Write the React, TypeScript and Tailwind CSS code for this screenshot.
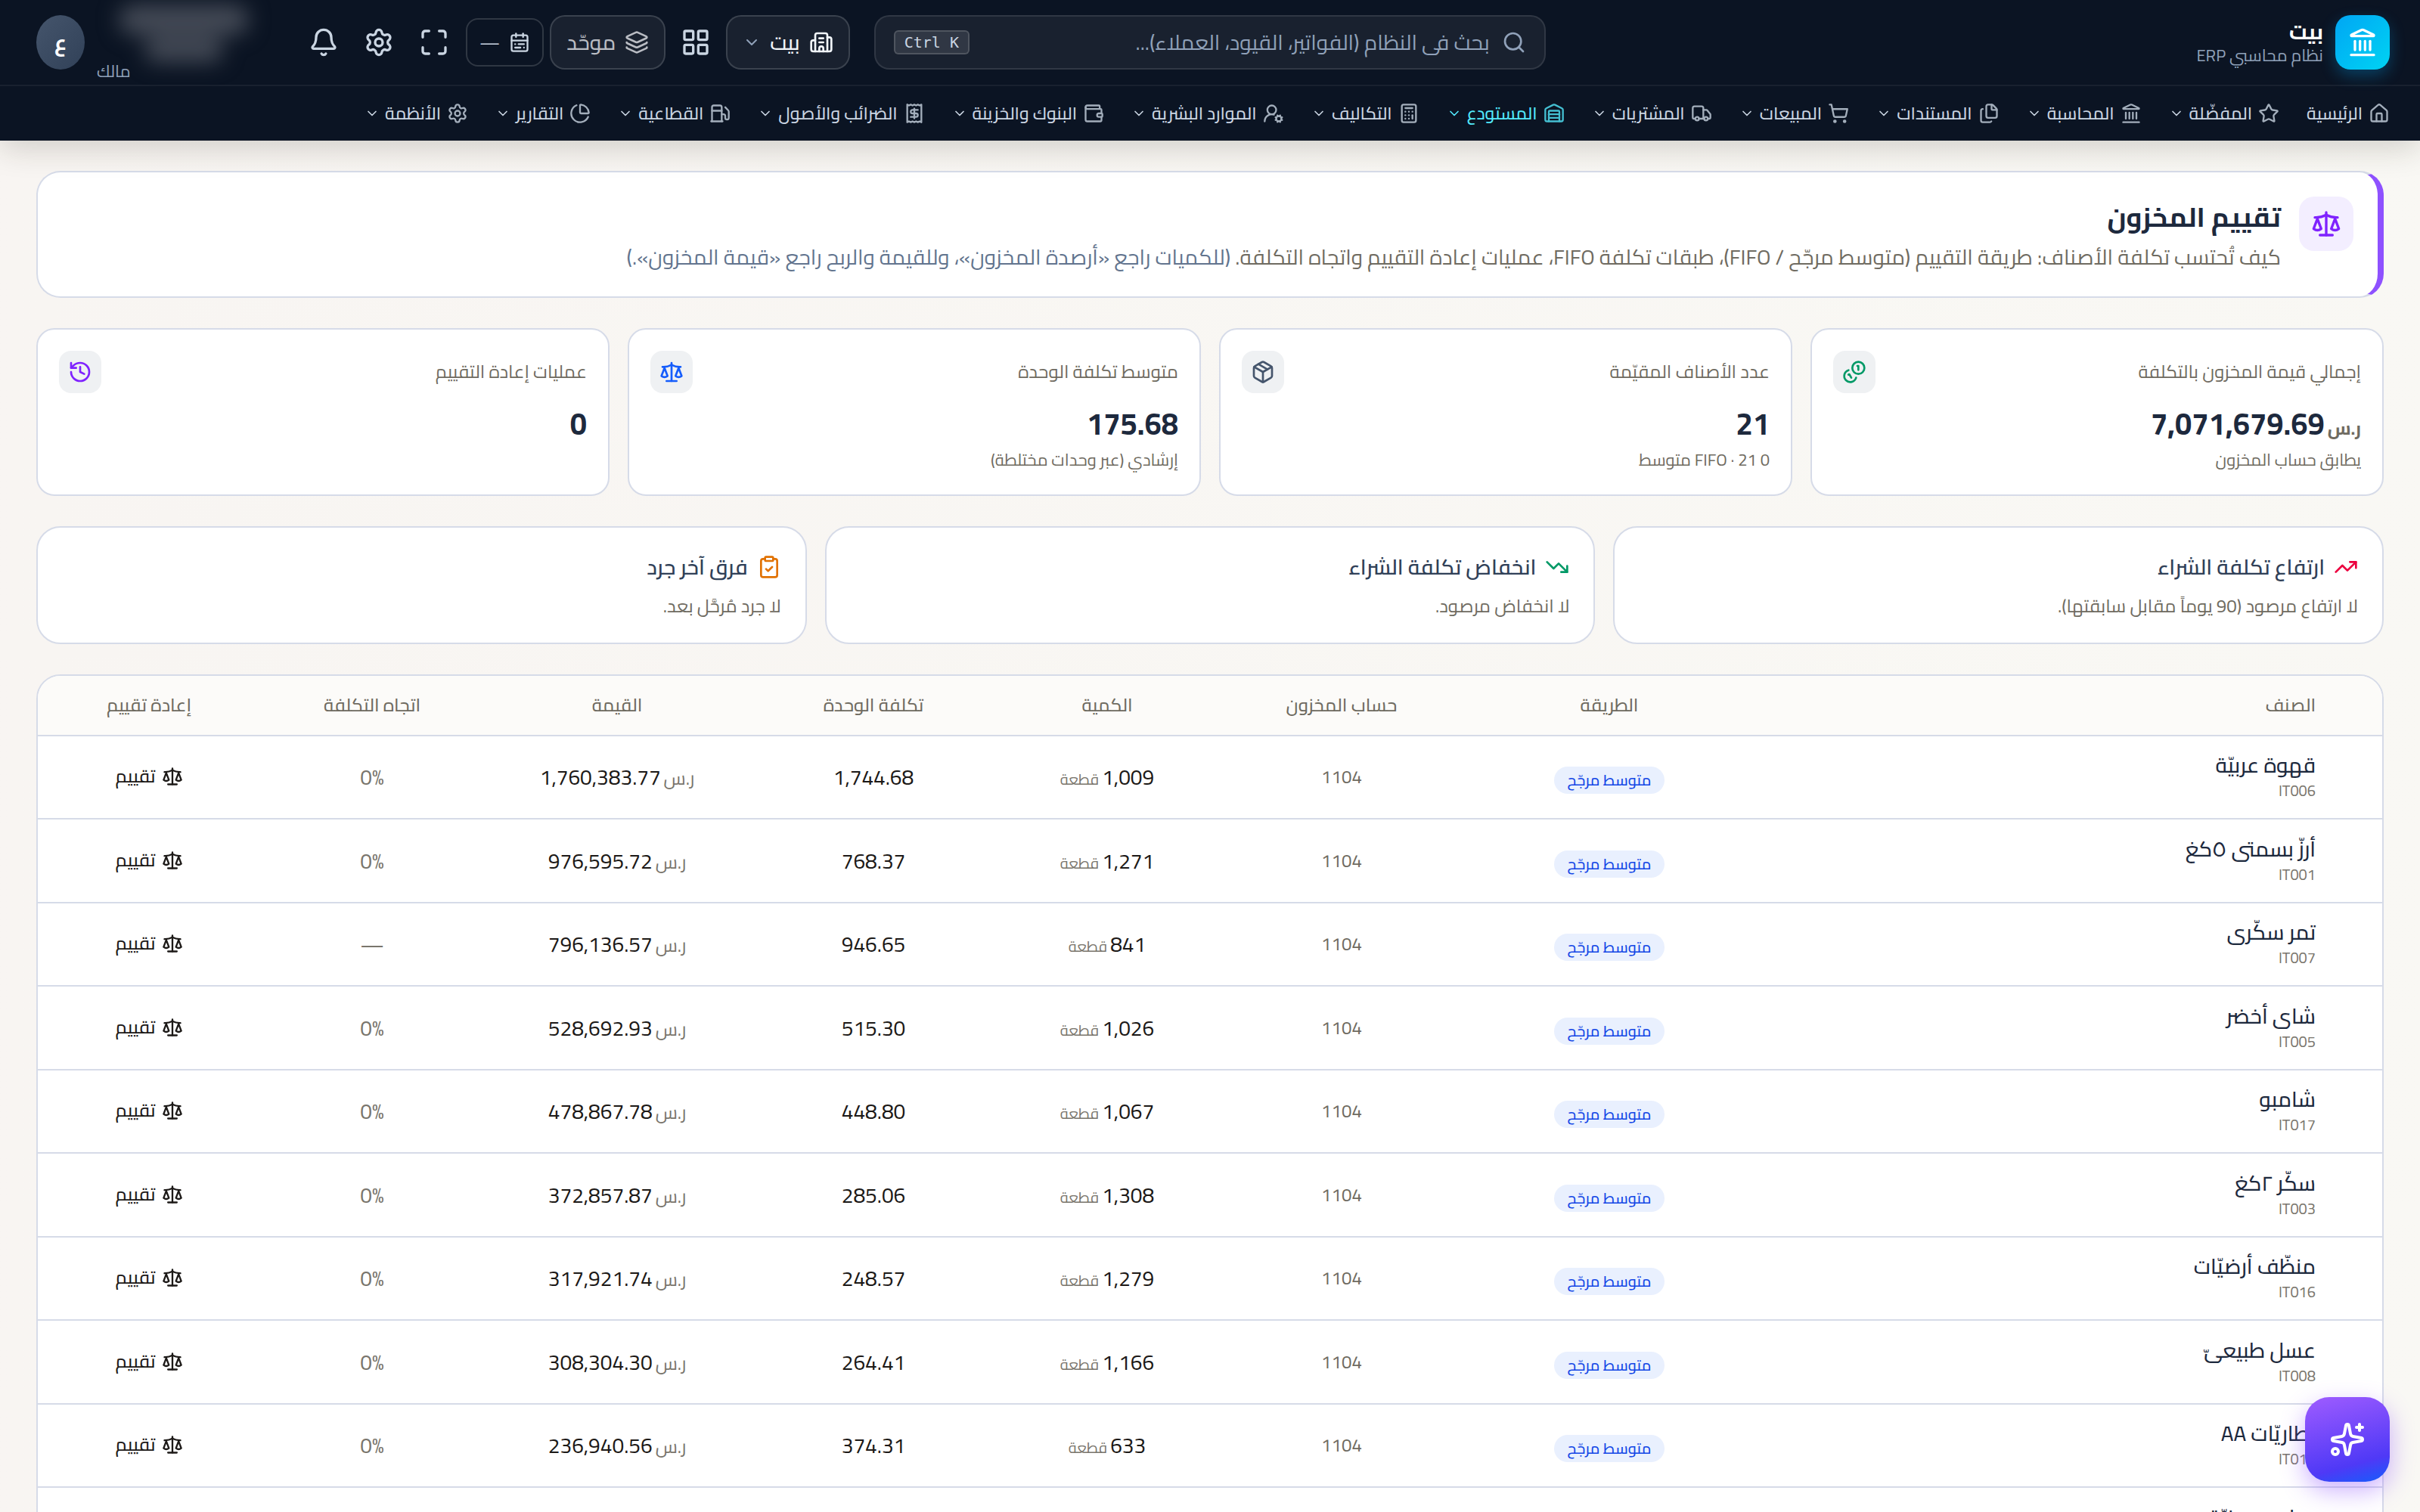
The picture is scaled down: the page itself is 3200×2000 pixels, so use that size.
import * as React from "react";
import {
  Bell,
  Building2,
  Calculator,
  CalendarRange,
  ChartPie,
  ChevronDown,
  ClipboardCheck,
  Files,
  Fuel,
  History,
  House,
  Landmark,
  Layers,
  LayoutGrid,
  Maximize,
  Package,
  Receipt,
  Scale,
  Search,
  Settings,
  ShoppingCart,
  Sparkles,
  Star,
  TrendingDown,
  TrendingUp,
  Truck,
  UserRoundCog,
  Wallet,
  Warehouse,
  type LucideIcon,
} from "lucide-react";

type NavEntry = { label: string; icon: LucideIcon; menu?: boolean; active?: boolean };

const navEntries: NavEntry[] = [
  { label: "الرئيسية", icon: House, menu: false },
  { label: "المفضّلة", icon: Star },
  { label: "المحاسبة", icon: Landmark },
  { label: "المستندات", icon: Files },
  { label: "المبيعات", icon: ShoppingCart },
  { label: "المشتريات", icon: Truck },
  { label: "المستودع", icon: Warehouse, active: true },
  { label: "التكاليف", icon: Calculator },
  { label: "الموارد البشرية", icon: UserRoundCog },
  { label: "البنوك والخزينة", icon: Wallet },
  { label: "الضرائب والأصول", icon: Receipt },
  { label: "القطاعية", icon: Fuel },
  { label: "التقارير", icon: ChartPie },
  { label: "الأنظمة", icon: Settings },
];

function CoinPair({ size = 24 }: { size?: number }) {
  return (
    <svg
      width={size}
      height={size}
      viewBox="0 0 24 24"
      fill="none"
      stroke="currentColor"
      strokeWidth={2}
      strokeLinecap="round"
      strokeLinejoin="round"
      aria-hidden="true"
    >
      <path d="M13.744 17.736a6 6 0 1 1-7.48-7.48" />
      <path d="M15 6h1v4" />
      <path d="m6.134 14.768.866-.5 2 3.464" />
      <circle cx="16" cy="8" r="6" />
    </svg>
  );
}

type Stat = {
  label: string;
  value: string;
  currency?: string;
  note?: string;
  icon: React.ComponentType<{ size?: number }>;
  tone: string;
};

const stats: Stat[] = [
  {
    label: "إجمالي قيمة المخزون بالتكلفة",
    value: "7,071,679.69",
    currency: "ر.س",
    note: "يطابق حساب المخزون",
    icon: CoinPair,
    tone: "text-[#009966]",
  },
  {
    label: "عدد الأصناف المقيّمة",
    value: "21",
    note: "0 FIFO · 21 متوسط",
    icon: Package,
    tone: "text-[#45556c]",
  },
  {
    label: "متوسط تكلفة الوحدة",
    value: "175.68",
    note: "إرشادي (عبر وحدات مختلطة)",
    icon: Scale,
    tone: "text-[#155dfc]",
  },
  { label: "عمليات إعادة التقييم", value: "0", icon: History, tone: "text-[#7f22fe]" },
];

const alerts = [
  {
    title: "ارتفاع تكلفة الشراء",
    note: "لا ارتفاع مرصود (90 يوماً مقابل سابقتها).",
    icon: TrendingUp,
    tone: "text-[#ec003f]",
  },
  {
    title: "انخفاض تكلفة الشراء",
    note: "لا انخفاض مرصود.",
    icon: TrendingDown,
    tone: "text-[#009966]",
  },
  {
    title: "فرق آخر جرد",
    note: "لا جرد مُرحَّل بعد.",
    icon: ClipboardCheck,
    tone: "text-[#e17100]",
  },
];

type Item = {
  name: string;
  code: string;
  qty: string;
  unitCost: string;
  value: string;
  trend: string;
};

const items: Item[] = [
  { name: "قهوة عربيّة", code: "IT006", qty: "1,009", unitCost: "1,744.68", value: "1,760,383.77", trend: "0%" },
  { name: "أرزّ بسمتى ٥كغ", code: "IT001", qty: "1,271", unitCost: "768.37", value: "976,595.72", trend: "0%" },
  { name: "تمر سكّرى", code: "IT007", qty: "841", unitCost: "946.65", value: "796,136.57", trend: "—" },
  { name: "شاى أخضر", code: "IT005", qty: "1,026", unitCost: "515.30", value: "528,692.93", trend: "0%" },
  { name: "شامبو", code: "IT017", qty: "1,067", unitCost: "448.80", value: "478,867.78", trend: "0%" },
  { name: "سكّر ٢كغ", code: "IT003", qty: "1,308", unitCost: "285.06", value: "372,857.87", trend: "0%" },
  { name: "منظّف أرضيّات", code: "IT016", qty: "1,279", unitCost: "248.57", value: "317,921.74", trend: "0%" },
  { name: "عسل طبيعىّ", code: "IT008", qty: "1,166", unitCost: "264.41", value: "308,304.30", trend: "0%" },
  { name: "بطاريّات AA", code: "IT019", qty: "633", unitCost: "374.31", value: "236,940.56", trend: "0%" },
  { name: "مياه معدنيّة", code: "IT011", qty: "1,120", unitCost: "201.15", value: "225,288.00", trend: "0%" },
];

function IconButton({ label, icon: Icon, wide }: { label: string; icon: LucideIcon; wide?: boolean }) {
  return (
    <button
      type="button"
      aria-label={label}
      className={
        "flex h-[72px] items-center justify-center rounded-[20px] text-slate-300 " + (wide ? "w-[68px]" : "w-16")
      }
    >
      <Icon size={40} strokeWidth={2} />
    </button>
  );
}

function TopBar() {
  return (
    <div className="flex h-[114px] items-center border-b-2 border-white/6 px-10">
      <div className="flex items-center gap-4">
        <div className="flex size-[72px] items-center justify-center rounded-[20px] bg-linear-to-br from-[#00a6f4] to-[#00d3f2] text-white shadow-[0_8px_20px_rgba(0,166,244,0.3)]">
          <Landmark size={40} strokeWidth={2} />
        </div>
        <div className="flex flex-col">
          <span className="text-[28px] leading-[34px] font-bold text-white">بيت</span>
          <span className="text-[22px] leading-[28px] text-slate-400">نظام محاسبي ERP</span>
        </div>
      </div>

      <div className="flex flex-1 justify-end px-8">
        <label className="flex h-[72px] w-full max-w-[888px] items-center gap-4 rounded-[20px] border-2 border-white/10 bg-white/6 px-6">
          <Search size={32} className="shrink-0 text-slate-400" strokeWidth={2} />
          <input
            type="text"
            aria-label="بحث"
            placeholder="بحث فى النظام (الفواتير، القيود، العملاء)..."
            className="min-w-0 flex-1 bg-transparent text-[28px] leading-10 text-white outline-none placeholder:text-slate-400"
          />
          <kbd
            dir="ltr"
            className="flex h-8 items-center rounded-md border-2 border-white/15 bg-white/10 px-3 font-['DejaVu_Sans_Mono',monospace] text-xl text-slate-300"
          >
            Ctrl K
          </kbd>
        </label>
      </div>

      <div className="flex items-center gap-2">
        <button
          type="button"
          className="flex h-[72px] items-center gap-3 rounded-[20px] border-2 border-white/15 bg-white/6 px-5 text-[28px] leading-10 font-medium text-slate-100"
        >
          <Building2 size={32} />
          بيت
          <ChevronDown size={24} className="text-slate-400" />
        </button>
        <IconButton label="التطبيقات" icon={LayoutGrid} />
        <button
          type="button"
          className="flex h-[72px] items-center gap-3 rounded-[20px] border-2 border-white/15 bg-white/6 px-5 text-[28px] leading-10 font-medium text-[#b9bcc3]"
        >
          <Layers size={32} />
          موحّد
        </button>
        <button
          type="button"
          aria-label="الفترة"
          className="flex h-16 items-center gap-3 rounded-2xl border-2 border-white/15 px-4 text-2xl text-slate-300"
        >
          <CalendarRange size={28} />—
        </button>
        <div className="flex items-center gap-[5px]">
          <IconButton label="ملء الشاشة" icon={Maximize} wide />
          <IconButton label="الإعدادات" icon={Settings} wide />
          <IconButton label="التنبيهات" icon={Bell} wide />
        </div>
      </div>

      <div className="flex items-center gap-4 ps-9 pe-2">
        <div className="flex w-[230px] flex-col items-center">
          <div aria-hidden="true" className="flex flex-col items-center gap-1 blur-[14px]">
            <div className="h-10 w-[172px] rounded-full bg-[#444a56]" />
            <div className="h-8 w-26 rounded-full bg-[#444a56]" />
          </div>
          <span className="self-end text-[22px] leading-6 text-slate-400">مالك</span>
        </div>
        <div className="flex h-[72px] w-16 items-center justify-center rounded-[50%] bg-linear-to-br from-[#45556c] to-[#314158] text-[28px] font-bold text-white">
          ع
        </div>
      </div>
    </div>
  );
}

function NavBar() {
  return (
    <nav className="flex h-[72px] items-center gap-1 px-6">
      {navEntries.map(({ label, icon: Icon, menu = true, active }) => (
        <a
          key={label}
          href="#"
          className={
            "flex items-center px-4 text-[23px] leading-9 font-medium whitespace-nowrap " +
            (active ? "text-[#53eafd]" : "text-slate-300")
          }
        >
          <Icon size={28} className="me-2 opacity-80" strokeWidth={2} />
          {label}
          {menu && <ChevronDown size={20} className="ms-[7px]" />}
        </a>
      ))}
    </nav>
  );
}

function PageHeader() {
  return (
    <section className="flex items-start gap-6 rounded-[32px] border-2 border-s-8 border-[#d6dbe8] border-s-[#8e51ff] bg-white p-8">
      <div className="flex size-[72px] shrink-0 items-center justify-center rounded-[20px] bg-[#f3eeff] text-[#7f22fe]">
        <Scale size={40} />
      </div>
      <div className="flex flex-col">
        <h1 className="text-4xl leading-[54px] font-bold text-[#1d293d]">تقييم المخزون</h1>
        <p className="mt-1.5 text-[28px] leading-10 text-[#6f6b61]">
          كيف تُحتسب تكلفة الأصناف: طريقة التقييم (متوسط مرجّح / FIFO)، طبقات تكلفة FIFO، عمليات إعادة التقييم واتجاه
          التكلفة.{" "}
          <span className="text-[#62748e]">
            (للكميات راجع «أرصدة المخزون»، وللقيمة والربح راجع «قيمة المخزون».)
          </span>
        </p>
      </div>
    </section>
  );
}

function StatCard({ stat }: { stat: Stat }) {
  const Icon = stat.icon;
  return (
    <article className="rounded-3xl border-2 border-[#d6dbe8] bg-white p-7">
      <div className="flex items-center justify-between">
        <span className="text-2xl leading-9 text-[#6f6b61]">{stat.label}</span>
        <span className={"flex size-14 items-center justify-center rounded-2xl bg-[#eff1f3] " + stat.tone}>
          <Icon size={32} />
        </span>
      </div>
      <div className="mt-4 text-[40px] leading-[50px] font-bold text-[#1d293d]">
        {stat.currency && <span className="me-1 text-2xl font-bold text-[#6f6b61]">{stat.currency}</span>}
        {stat.value}
      </div>
      {stat.note && <div className="mt-1 text-[22px] leading-9 text-[#6f6b61]">{stat.note}</div>}
    </article>
  );
}

function ItemsTable() {
  const head = "text-2xl leading-9 font-medium text-[#6f6b61]";
  return (
    <section className="overflow-hidden rounded-[32px] border-2 border-[#d6dbe8] bg-white">
      <table className="w-full table-fixed border-collapse text-center">
        <colgroup>
          <col />
          <col className="w-[380px]" />
          <col className="w-[328px]" />
          <col className="w-[292px]" />
          <col className="w-[326px]" />
          <col className="w-[352px]" />
          <col className="w-[296px]" />
          <col className="w-[294px]" />
        </colgroup>
        <thead>
          <tr className="h-[79px] border-b-2 border-[#d6dbe8] bg-[#fcfbf9]">
            <th className={"ps-[88px] text-start " + head}>الصنف</th>
            <th className={head}>الطريقة</th>
            <th className={head}>حساب المخزون</th>
            <th className={head}>الكمية</th>
            <th className={head}>تكلفة الوحدة</th>
            <th className={head}>القيمة</th>
            <th className={head}>اتجاه التكلفة</th>
            <th className={head}>إعادة تقييم</th>
          </tr>
        </thead>
        <tbody>
          {items.map((item) => (
            <tr key={item.code} className="h-[110px] border-b-2 border-[#d6dbe8] even:h-[111px]">
              <td className="ps-[88px] text-start">
                <div className="text-[28px] leading-9 font-medium text-[#1d293d]">{item.name}</div>
                <div className="text-xl leading-8 text-[#79756c]">{item.code}</div>
              </td>
              <td>
                <span className="mt-2 inline-flex h-9 items-center rounded-full bg-[#e9f0fe] px-[18px] text-xl font-medium text-[#1447e6]">
                  متوسط مرجّح
                </span>
              </td>
              <td className="text-2xl text-[#6f6b61]">1104</td>
              <td className="text-[28px] text-[#1c1917]">
                {item.qty}
                <span className="ms-1 text-xl text-[#79756c]">قطعة</span>
              </td>
              <td className="text-[28px] text-[#1c1917]">{item.unitCost}</td>
              <td className="text-[28px] text-[#1c1917]">
                <span className="me-1 text-2xl text-[#79756c]">ر.س</span>
                {item.value}
              </td>
              <td className="text-[28px] text-[#79756c]">{item.trend}</td>
              <td>
                <button
                  type="button"
                  className="inline-flex items-center gap-2 text-2xl leading-9 font-medium text-[#1c1917]"
                >
                  <Scale size={28} />
                  تقييم
                </button>
              </td>
            </tr>
          ))}
        </tbody>
      </table>
    </section>
  );
}

export default function App() {
  return (
    <div
      dir="rtl"
      lang="ar"
      className="h-screen overflow-hidden bg-linear-to-l from-[#f9f8f4] to-[#f8f5f2] font-['Cairo','Noto_Sans',sans-serif]"
    >
      <header className="relative bg-[#0b1423] shadow-[0_8px_40px_rgba(40,35,20,0.2)]">
        <TopBar />
        <NavBar />
      </header>

      <main className="flex flex-col gap-10 px-12 pt-10">
        <PageHeader />

        <section className="grid grid-cols-4 gap-6">
          {stats.map((stat) => (
            <StatCard key={stat.label} stat={stat} />
          ))}
        </section>

        <section className="grid grid-cols-3 gap-6">
          {alerts.map(({ title, note, icon: Icon, tone }) => (
            <article key={title} className="rounded-[32px] border-2 border-[#d6dbe8] bg-white p-8">
              <h2 className="flex items-center gap-3 text-[28px] leading-10 font-semibold text-[#314158]">
                <Icon size={32} className={tone} />
                {title}
              </h2>
              <p className="mt-4 text-2xl leading-8 text-[#6f6b61]">{note}</p>
            </article>
          ))}
        </section>

        <ItemsTable />
      </main>

      <button
        type="button"
        aria-label="المساعد الذكي"
        className="fixed right-10 bottom-10 flex size-28 items-center justify-center rounded-[32px] bg-[linear-gradient(165deg,#9f5cff_0%,#4f39f6_75%,#155dfc_100%)] text-white shadow-[0_12px_32px_rgba(142,81,255,0.45)]"
      >
        <Sparkles size={48} />
      </button>
    </div>
  );
}
